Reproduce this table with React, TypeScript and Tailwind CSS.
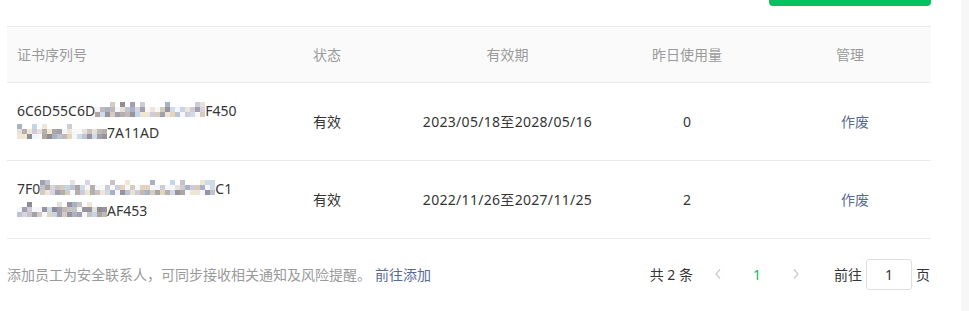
import React from "react";

const PALETTE = [
  "#b4afad", "#cfcbd9", "#e6e2da", "#a29fae", "#cfdce8", "#efe6d6", "#bcc4d2",
  "#97949f", "#e3d4bd", "#c3d5e8", "#f7f8fb", "#aca6a3", "#d6cbbf", "#bfbab7",
  "#a7b2c4", "#d8d2e2", "#8f8c94", "#c7c3c0",
];

function Mosaic({ width, seed }: { width: number; seed: number }) {
  const size = 5;
  const cols = Math.max(1, Math.round(width / size));
  const rows = 3;
  let s = seed;
  const rnd = () => {
    s = (s * 1103515245 + 12345) & 0x7fffffff;
    return s / 0x7fffffff;
  };
  const cells: string[] = [];
  for (let r = 0; r < rows; r++) {
    for (let c = 0; c < cols; c++) {
      if (r === 0) {
        cells.push(rnd() < 0.75 ? "#ffffff" : PALETTE[Math.floor(rnd() * PALETTE.length)]);
      } else {
        cells.push(rnd() < 0.12 ? "#f4f6fa" : PALETTE[Math.floor(rnd() * PALETTE.length)]);
      }
    }
  }
  return (
    <span
      className="inline-grid align-middle -mt-[4px]"
      style={{ gridTemplateColumns: `repeat(${cols}, ${size}px)`, width: cols * size }}
    >
      {cells.map((c, i) => (
        <span key={i} className="block h-[5px] w-[5px]" style={{ backgroundColor: c }} />
      ))}
    </span>
  );
}

function Chevron({ dir }: { dir: "left" | "right" }) {
  return (
    <svg width="8" height="12" viewBox="0 0 8 12" fill="none">
      {dir === "left" ? (
        <polyline points="6,1.5 2,6 6,10.5" stroke="#c8cbd1" strokeWidth="1.3" />
      ) : (
        <polyline points="2,1.5 6,6 2,10.5" stroke="#c8cbd1" strokeWidth="1.3" />
      )}
    </svg>
  );
}

const rows = [
  {
    l1: (
      <>
        6C6D55C6D<Mosaic width={110} seed={7} />F450
      </>
    ),
    l2: (
      <>
        <Mosaic width={88} seed={31} />7A11AD
      </>
    ),
    date: "2023/05/18至2028/05/16",
    used: "0",
  },
  {
    l1: (
      <>
        7F0<Mosaic width={175} seed={99} />C1
      </>
    ),
    l2: (
      <>
        <Mosaic width={90} seed={55} />AF453
      </>
    ),
    date: "2022/11/26至2027/11/25",
    used: "2",
  },
];

export default function App() {
  return (
    <div
      className="flex h-[311px] w-[969px] overflow-hidden bg-white text-[14px] text-[#353535]"
      style={{ fontFamily: '"Noto Sans", "Noto Sans CJK SC", sans-serif' }}
    >
      <div className="w-[961px] pl-[7px] pr-[30px]">
        <div className="flex h-[26px] justify-end">
          <div className="h-[6px] w-[162px] rounded-b-[4px] bg-[#07c160]" />
        </div>
        <div className="w-[924px]">
          <div className="grid h-[57px] grid-cols-[296px_100px_209px_150px_169px] items-center border-y border-[#ebebeb] bg-[#fafafa] text-[#9a9a9a]">
            <div className="pl-[10px]">证书序列号</div>
            <div className="pl-[10px]">状态</div>
            <div className="text-center">有效期</div>
            <div className="text-center">昨日使用量</div>
            <div className="pl-[74px]">管理</div>
          </div>
          {rows.map((r, i) => (
            <div
              key={i}
              className="grid h-[78px] grid-cols-[296px_100px_209px_150px_169px] items-center border-b border-[#ebebeb]"
            >
              <div className="pl-[10px] leading-[22px]">
                <div className="whitespace-nowrap">{r.l1}</div>
                <div className="whitespace-nowrap">{r.l2}</div>
              </div>
              <div className="pl-[10px]">有效</div>
              <div className="text-center whitespace-nowrap tracking-[0.3px]">{r.date}</div>
              <div className="text-center">{r.used}</div>
              <div className="pl-[79px] text-[#576b95]">作废</div>
            </div>
          ))}
          <div className="flex h-[72px] items-center justify-between pb-[2px]">
            <div className="text-[#9a9a9a]">
              添加员工为安全联系人，可同步接收相关通知及风险提醒。
              <span className="ml-[4px] text-[#576b95]">前往添加</span>
            </div>
            <div className="flex items-center">
              <span className="whitespace-nowrap">共 2 条</span>
              <span className="ml-[10px] flex h-[30px] w-[30px] items-center justify-center">
                <Chevron dir="left" />
              </span>
              <span className="ml-[9px] flex h-[30px] w-[30px] items-center justify-center text-[#07c160]">
                1
              </span>
              <span className="ml-[9px] flex h-[30px] w-[30px] items-center justify-center">
                <Chevron dir="right" />
              </span>
              <span className="ml-[23px]">前往</span>
              <span className="ml-[4px] flex h-[31px] w-[46px] items-center justify-center rounded-[3px] border border-[#dcdfe6]">
                1
              </span>
              <span className="ml-[4px] mr-[1px]">页</span>
            </div>
          </div>
        </div>
      </div>
      <div className="h-full w-[8px] bg-[#f7f7f7]" />
    </div>
  );
}
